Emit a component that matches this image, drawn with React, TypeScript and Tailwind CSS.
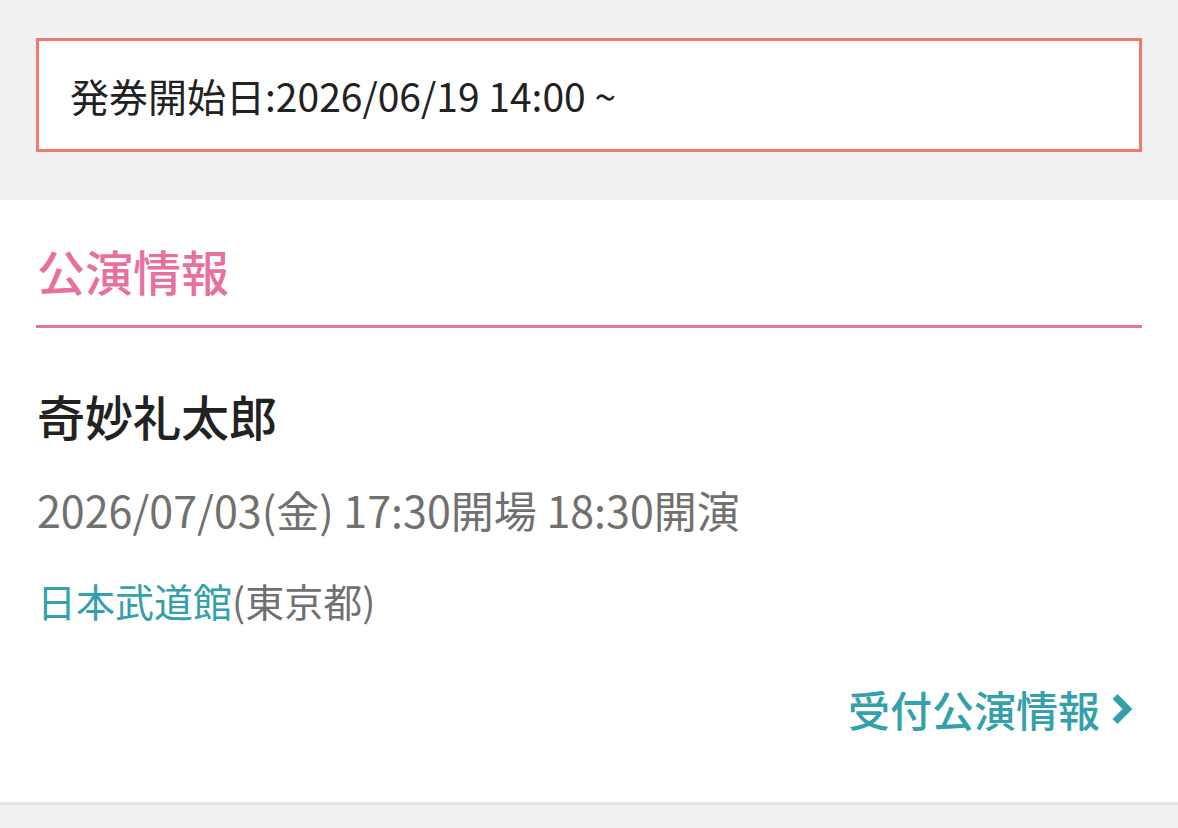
const FONT = "font-['Noto_Sans_CJK_JP',sans-serif]";

function Chevron() {
  return (
    <svg width="24" height="32" viewBox="0 0 24 32" className="ml-[11px]" aria-hidden="true">
      <polyline
        points="4,3.5 16.5,16 4,28.5"
        fill="none"
        stroke="#33a0ab"
        strokeWidth="7"
        strokeLinecap="butt"
        strokeLinejoin="miter"
      />
    </svg>
  );
}

export default function App() {
  return (
    <div className={`${FONT} w-[1178px] h-[828px] bg-[#f1f1f1] overflow-hidden`}>
      {/* 発券開始日 */}
      <div className="h-[200px] pt-[38px] px-[36px]">
        <div className="h-[114px] border-[3px] border-[#ee7b6d] bg-white flex items-center pl-[31px]">
          <p className="text-[39px] leading-[40px] text-[#222222]">発券開始日:2026/06/19 14:00 ~</p>
        </div>
      </div>

      {/* 公演情報 */}
      <div className="bg-white px-[36px] pb-[72px] border-b-[3px] border-[#e3e3e3]">
        <div className="pt-[46px] pb-[31px] border-b-[3px] border-[#e8709f]">
          <h2 className="text-[48px] leading-[48px] font-medium text-[#e8709f] pl-[1px]">公演情報</h2>
        </div>

        <p className="mt-[63px] text-[48px] leading-[48px] font-medium text-[#222222] pl-[1px]">奇妙礼太郎</p>

        <p className="mt-[49px] text-[43px] leading-[43px] text-[#707070] pl-[1px]">
          2026/07/03(金) 17:30開場 18:30開演
        </p>

        <p className="mt-[49px] text-[39px] leading-[40px] text-[#707070] pl-[1px]">
          <span className="text-[#33a0ab]">日本武道館</span>(東京都)
        </p>

        <div className="mt-[68px] flex justify-end items-center pr-[7px]">
          <span className="text-[42px] leading-[42px] font-medium text-[#33a0ab]">受付公演情報</span>
          <Chevron />
        </div>
      </div>
    </div>
  );
}
